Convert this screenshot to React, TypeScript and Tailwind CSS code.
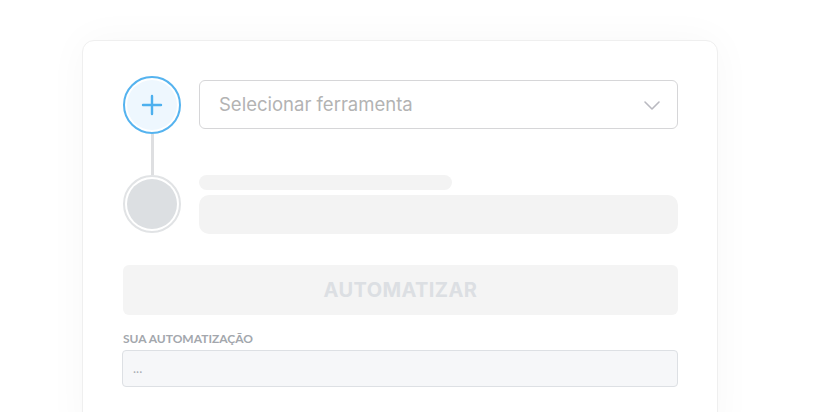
import React from "react";

export default function App() {
  return (
    <div className="w-[831px] h-[412px] overflow-hidden bg-white" style={{ fontFamily: "Lato, 'Open Sans', sans-serif" }}>
      <div className="ml-[82px] mt-[40px] w-[636px] h-[400px] rounded-[12px] border border-[#efefef] bg-white shadow-[0_0_40px_rgba(0,0,0,0.035)] pt-[35px] pl-[40px] pr-[39px]">
        <div className="flex items-start gap-[18px]">
          <div className="w-[58px] h-[58px] shrink-0 rounded-full border-2 border-[#55b3ef] bg-white p-[2px]">
            <div className="w-full h-full rounded-full bg-[#eef7fe] flex items-center justify-center">
              <svg width="24" height="24" viewBox="0 0 24 24" fill="none" stroke="#4db0ee" strokeWidth="2.4" strokeLinecap="round">
                <path d="M12 3v18M3 12h18" />
              </svg>
            </div>
          </div>
          <div className="mt-[4px] flex-1 h-[49px] rounded-[6px] border border-[#d6d6d8] flex items-center justify-between pl-[19px] pr-[16px]">
            <span className="text-[18.5px] text-[#b3b3b3]" style={{ fontFamily: "Inter, sans-serif" }}>Selecionar ferramenta</span>
            <svg width="18" height="12" viewBox="0 0 18 12" fill="none" stroke="#b9b9c0" strokeWidth="1.6" strokeLinecap="round" strokeLinejoin="round">
              <path d="M2 3l7 7 7-7" />
            </svg>
          </div>
        </div>
        <div className="ml-[28px] w-[3px] h-[41px] bg-[#dedfe1]" />
        <div className="flex items-start gap-[18px]">
          <div className="w-[58px] h-[58px] shrink-0 rounded-full border-2 border-[#e1e3e5] bg-white p-[2px]">
            <div className="w-full h-full rounded-full bg-[#dcdfe2]" />
          </div>
          <div className="flex-1 flex flex-col">
            <div className="w-[253px] h-[15px] rounded-full bg-[#f3f3f3]" />
            <div className="mt-[5px] h-[39px] rounded-[10px] bg-[#f3f3f3]" />
          </div>
        </div>
        <div className="mt-[31px] h-[50px] rounded-[6px] bg-[#f4f4f4] flex items-center justify-center">
          <span className="text-[20px] font-bold text-[#dcdfe3] tracking-[0.4px]" style={{ fontFamily: "Inter, sans-serif" }}>AUTOMATIZAR</span>
        </div>
        <div className="mt-[16px] h-[16px] text-[12px] leading-[16px] font-bold text-[#a3a7ad]">SUA AUTOMATIZAÇÃO</div>
        <div className="mt-[3px] -ml-[1px] h-[37px] rounded-[4px] border border-[#dde0e4] bg-[#f6f7f9] flex items-center pl-[10px]">
          <span className="text-[13px] text-[#a9adb3]">...</span>
        </div>
      </div>
    </div>
  );
}
